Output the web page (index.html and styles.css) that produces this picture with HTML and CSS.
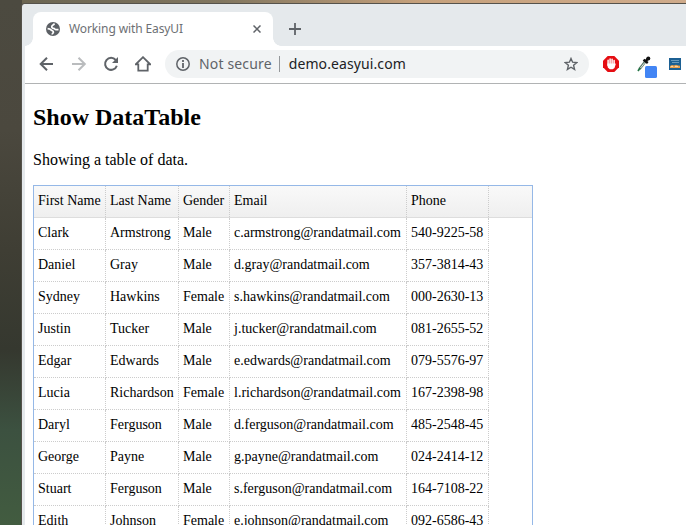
FILE: index.html
```html
<!DOCTYPE html>
<html lang="en">
<head>
<meta charset="utf-8">
<title>Working with EasyUI</title>
<link rel="stylesheet" href="styles.css">
</head>
<body>
<div class="window">
  <div class="tabstrip">
    <div class="tab">
      <svg class="globe" width="14" height="14" viewBox="0 0 14 14"><circle cx="7" cy="7" r="7" fill="#5c6065"/><path d="M8.300 1.500C8 3.300 6 2.800 5.800 4.500 5.600 5.600 6.500 6.200 7.700 6.300 8.800 6.500 8.700 7.700 10 7.700H12.500M1.600 6.600C3 6.700 4.200 6.800 5 7.900 6 9 7.700 8.800 7.400 10.200 7.200 11.200 6.200 11 6.200 12.400" fill="none" stroke="#fff" stroke-width="1.700"/></svg>
      <span class="tab-title">Working with EasyUI</span>
      <svg class="close" width="8" height="8" viewBox="0 0 8 8"><path d="M.5.5l7 7M7.500.500l-7 7" stroke="#5f6368" stroke-width="1.500"/></svg>
    </div>
    <svg class="plus" width="12" height="12" viewBox="0 0 12 12"><path d="M6 0v12M0 6h12" stroke="#5f6368" stroke-width="1.800"/></svg>
  </div>
  <div class="toolbar">
    <svg class="nav" width="16" height="16" viewBox="0 0 16 16"><path d="M14 8H2M8 1.700 1.700 8 8 14.300" fill="none" stroke="#5f6368" stroke-width="2"/></svg>
    <svg class="nav" width="16" height="16" viewBox="0 0 16 16"><path d="M1 8h12M7.500 1.700 13.800 8 7.500 14.300" fill="none" stroke="#babcbe" stroke-width="2"/></svg>
    <svg class="nav" width="16" height="16" viewBox="0 0 16 16"><path d="M12.700 4A6 6 0 1 0 13.800 9.700" fill="none" stroke="#5f6368" stroke-width="2"/><path d="M15 1v6H9z" fill="#5f6368"/></svg>
    <svg class="nav" width="16" height="16" viewBox="0 0 16 16"><path d="M.8 8.300H3.300V14.700H12.700V8.300H15.200L8 1.200z" fill="none" stroke="#5f6368" stroke-width="1.800"/></svg>
    <div class="omnibox">
      <svg class="info" width="14" height="14" viewBox="0 0 14 14"><circle cx="7" cy="7" r="6.200" fill="none" stroke="#5f6368" stroke-width="1.500"/><path d="M7 3v2M7 6v5" stroke="#5f6368" stroke-width="1.800"/></svg>
      <span class="security">Not secure</span>
      <span class="divider"></span>
      <span class="url">demo.easyui.com</span>
      <svg class="star" width="14" height="14" viewBox="0 0 14 14"><path d="M7 1.500 8.600 5.200 12.800 5.600 9.600 8.300 10.600 12.400 7 10.200 3.400 12.400 4.400 8.300 1.200 5.600 5.400 5.200z" fill="none" stroke="#5f6368" stroke-width="1.400"/></svg>
    </div>
    <svg class="blocker" width="16" height="16" viewBox="0 0 16 16"><path d="M4.700 0h6.600L16 4.700v6.600L11.300 16H4.700L0 11.300V4.700z" fill="#e50d12"/><path d="M5.100 9.500V4.300M7.100 8V2.900M9.100 8V3.200M11.100 9V4.500" stroke="#fff" stroke-width="1.500" stroke-linecap="round"/><path d="M4.350 7.500h7.500L12.800 7.800 11.500 12 9.700 13.300H6.800L4.800 11.500z" fill="#fff"/></svg>
    <svg class="picker" width="22" height="22" viewBox="0 0 22 22"><path d="M3.500 13 9.300 5.500" stroke="#587466" stroke-width="2.600"/><path d="M4.500 12 9 6.300" stroke="#d7e5dc" stroke-width="1"/><path d="M2 15l2-3" stroke="#217343" stroke-width="1.700"/><path d="M7.500 3.800l4.300 3.300M9 5.800l3.400-3.600" stroke="#111" stroke-width="2.500"/><circle cx="12.300" cy="2.600" r="2" fill="#111"/><rect x="9" y="10" width="12" height="12" rx="1.500" fill="#4285f4"/></svg>
    <svg class="cookie" width="12" height="12" viewBox="0 0 12 12"><rect width="12" height="12" fill="#1c6093"/><path d="M2 2.500h8M3 4.500h7" stroke="#7fa9c8" stroke-width=".8"/><path d="M1 10V8l2-1 2 .6L7 6.800l2 .7 2 .3V10H1z" fill="#eda14d"/><path d="M2 8.500h2M6 8.500h3" stroke="#fad5a1"/></svg>
  </div>
  <main class="page">
    <h2>Show DataTable</h2>
    <p>Showing a table of data.</p>
    <div class="datagrid">
      <div class="row head"><span>First Name</span><span>Last Name</span><span>Gender</span><span>Email</span><span>Phone</span></div>
      <div class="row"><span>Clark</span><span>Armstrong</span><span>Male</span><span>c.armstrong@randatmail.com</span><span>540-9225-58</span></div>
      <div class="row"><span>Daniel</span><span>Gray</span><span>Male</span><span>d.gray@randatmail.com</span><span>357-3814-43</span></div>
      <div class="row"><span>Sydney</span><span>Hawkins</span><span>Female</span><span>s.hawkins@randatmail.com</span><span>000-2630-13</span></div>
      <div class="row"><span>Justin</span><span>Tucker</span><span>Male</span><span>j.tucker@randatmail.com</span><span>081-2655-52</span></div>
      <div class="row"><span>Edgar</span><span>Edwards</span><span>Male</span><span>e.edwards@randatmail.com</span><span>079-5576-97</span></div>
      <div class="row"><span>Lucia</span><span>Richardson</span><span>Female</span><span>l.richardson@randatmail.com</span><span>167-2398-98</span></div>
      <div class="row"><span>Daryl</span><span>Ferguson</span><span>Male</span><span>d.ferguson@randatmail.com</span><span>485-2548-45</span></div>
      <div class="row"><span>George</span><span>Payne</span><span>Male</span><span>g.payne@randatmail.com</span><span>024-2414-12</span></div>
      <div class="row"><span>Stuart</span><span>Ferguson</span><span>Male</span><span>s.ferguson@randatmail.com</span><span>164-7108-22</span></div>
      <div class="row"><span>Edith</span><span>Johnson</span><span>Female</span><span>e.johnson@randatmail.com</span><span>092-6586-43</span></div>
    </div>
  </main>
</div>
</body>
</html>
```
FILE: styles.css
```css
* { box-sizing: border-box; }
svg { display: block; flex: none; }
body {
  margin: 0;
  height: 525px;
  overflow: hidden;
  padding: 4px 0 0 22px;
  background:
    linear-gradient(90deg, #6b6552, #81765f 30%, #c6a17c 60%, #cfab8b) 22px 0 / 664px 4px no-repeat,
    linear-gradient(180deg, #4c4a40 0, #4b483e 130px, #3f3e34 250px, #35382f 350px, #3c5140 430px, #425c40 525px);
}
.window {
  height: 521px;
  overflow: hidden;
  border-left: 3px solid #e5e9ec;
  border-top-left-radius: 3px;
  background: #fff;
  box-shadow: 0 0 0 1px #55524b;
}
.tabstrip {
  display: flex;
  height: 42px;
  padding: 8px 0 0 8px;
  background: #e5e9ec;
}
.tab {
  position: relative;
  display: flex;
  align-items: center;
  width: 240px;
  height: 34px;
  padding: 0 12px 0 13px;
  border-radius: 8px 8px 0 0;
  background: #fff;
}
.tab::before, .tab::after {
  content: "";
  position: absolute;
  bottom: 0;
  width: 8px;
  height: 8px;
}
.tab::before { left: -8px; background: radial-gradient(circle at 0 0, #e5e9ec 7.5px, #fff 8px); }
.tab::after { right: -8px; background: radial-gradient(circle at 100% 0, #e5e9ec 7.5px, #fff 8px); }
.tab-title {
  flex: 1;
  margin: 0 0 2px 9px;
  color: #6d7074;
  font: 12px/17px "Noto Sans", sans-serif;
  letter-spacing: -0.11px;
}
.plus { margin: 11px 0 0 16px; }
.toolbar {
  display: flex;
  align-items: center;
  height: 38px;
  padding: 0 0 1px 14px;
  border-bottom: 1px solid #b1b3b4;
}
.nav { margin-right: 16px; }
.omnibox {
  display: flex;
  align-items: center;
  width: 424px;
  height: 28px;
  margin-left: -2px;
  padding: 0 11px;
  border-radius: 14px;
  background: #f1f3f4;
  font: 14px/20px "Noto Sans", sans-serif;
}
.security { margin-left: 9px; color: #5f6368; letter-spacing: 0.15px; }
.divider { width: 1px; height: 16px; margin: 0 9px 0 7px; background: #94979a; }
.url { color: #202124; letter-spacing: 0.1px; }
.star { margin-left: auto; }
.blocker { margin-left: 14px; }
.picker { margin: 5px 0 0 17px; }
.cookie { margin-left: 11px; }
.page {
  padding: 1px 8px 0;
  color: #000;
  font: 16px/18px "Liberation Serif", serif;
}
h2 { margin: 19px 0 20px; font-size: 24px; line-height: 27px; }
p { margin: 0 0 16px; }
.datagrid {
  width: 500px;
  border: 1px solid #95b8e7;
  font-size: 14px;
}
.row {
  display: grid;
  grid-template-columns: 72px 73px 51px 177px 82px;
  height: 32px;
  line-height: 29px;
}
.row span {
  padding: 0 0 0 4px;
  border: 0 dotted #ccc;
  border-width: 0 1px 1px 0;
  white-space: nowrap;
}
.head {
  height: 32px;
  border-bottom: 1px solid #ddd;
  background: linear-gradient(#f9f9f9, #efefef);
}
.head span { border-bottom: 0; }
```
